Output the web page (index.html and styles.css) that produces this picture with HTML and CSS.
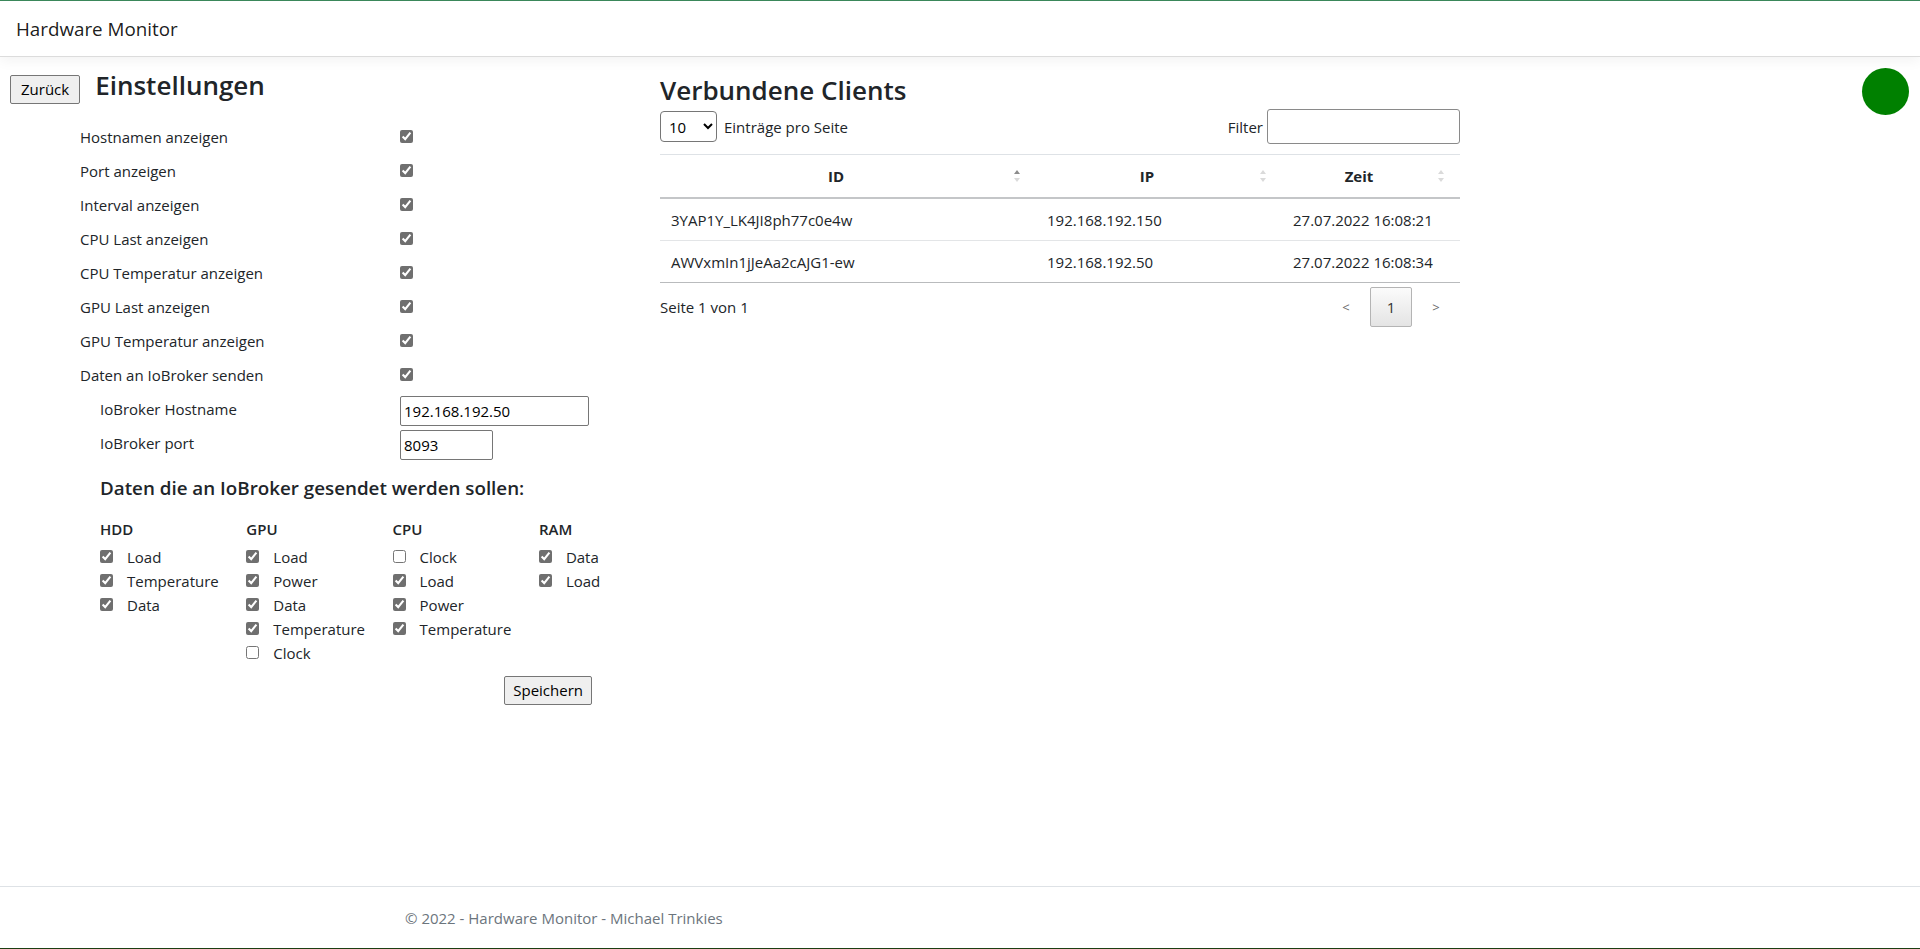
FILE: index.html
```html
<!DOCTYPE html>
<html lang="de">
<head>
<meta charset="utf-8">
<title>Hardware Monitor</title>
<link rel="stylesheet" href="styles.css">
</head>
<body>
<header class="navbar"><span class="brand">Hardware Monitor</span></header>
<main class="main">
  <section class="settings">
    <div class="settings-head">
      <button class="btn" type="button">Zurück</button>
      <h3 class="title">Einstellungen</h3>
    </div>
    <div class="settings-body">
      <div class="opt-grid">
        <span class="opt-label">Hostnamen anzeigen</span><span class="opt-ctl"><input class="cb" type="checkbox" checked></span>
        <span class="opt-label">Port anzeigen</span><span class="opt-ctl"><input class="cb" type="checkbox" checked></span>
        <span class="opt-label">Interval anzeigen</span><span class="opt-ctl"><input class="cb" type="checkbox" checked></span>
        <span class="opt-label">CPU Last anzeigen</span><span class="opt-ctl"><input class="cb" type="checkbox" checked></span>
        <span class="opt-label">CPU Temperatur anzeigen</span><span class="opt-ctl"><input class="cb" type="checkbox" checked></span>
        <span class="opt-label">GPU Last anzeigen</span><span class="opt-ctl"><input class="cb" type="checkbox" checked></span>
        <span class="opt-label">GPU Temperatur anzeigen</span><span class="opt-ctl"><input class="cb" type="checkbox" checked></span>
        <span class="opt-label">Daten an IoBroker senden</span><span class="opt-ctl"><input class="cb" type="checkbox" checked></span>
        <span class="opt-label sub">IoBroker Hostname</span><span class="opt-ctl"><input class="txt host" type="text" value="192.168.192.50"></span>
        <span class="opt-label sub">IoBroker port</span><span class="opt-ctl"><input class="txt port" type="text" value="8093"></span>
      </div>
      <h5 class="send-title">Daten die an IoBroker gesendet werden sollen:</h5>
      <div class="send-cols">
        <div class="send-col">
          <div class="col-head">HDD</div>
          <label class="chk"><input class="cb" type="checkbox" checked><span>Load</span></label>
          <label class="chk"><input class="cb" type="checkbox" checked><span>Temperature</span></label>
          <label class="chk"><input class="cb" type="checkbox" checked><span>Data</span></label>
        </div>
        <div class="send-col">
          <div class="col-head">GPU</div>
          <label class="chk"><input class="cb" type="checkbox" checked><span>Load</span></label>
          <label class="chk"><input class="cb" type="checkbox" checked><span>Power</span></label>
          <label class="chk"><input class="cb" type="checkbox" checked><span>Data</span></label>
          <label class="chk"><input class="cb" type="checkbox" checked><span>Temperature</span></label>
          <label class="chk"><input class="cb" type="checkbox"><span>Clock</span></label>
        </div>
        <div class="send-col">
          <div class="col-head">CPU</div>
          <label class="chk"><input class="cb" type="checkbox"><span>Clock</span></label>
          <label class="chk"><input class="cb" type="checkbox" checked><span>Load</span></label>
          <label class="chk"><input class="cb" type="checkbox" checked><span>Power</span></label>
          <label class="chk"><input class="cb" type="checkbox" checked><span>Temperature</span></label>
        </div>
        <div class="send-col">
          <div class="col-head">RAM</div>
          <label class="chk"><input class="cb" type="checkbox" checked><span>Data</span></label>
          <label class="chk"><input class="cb" type="checkbox" checked><span>Load</span></label>
        </div>
      </div>
      <div class="save-row"><button class="btn" type="button">Speichern</button></div>
    </div>
  </section>

  <section class="clients">
    <h3 class="title clients-title">Verbundene Clients</h3>
    <div class="controls">
      <div class="per-page">
        <select class="sel"><option>10</option><option>25</option><option>50</option></select>
        <span>Einträge pro Seite</span>
      </div>
      <div class="filter">
        <span>Filter</span>
        <input class="txt filter-input" type="text">
      </div>
    </div>
    <table class="tbl">
      <colgroup>
        <col class="c-id">
        <col class="c-ip">
        <col class="c-time">
      </colgroup>
      <thead>
        <tr>
          <th class="sort asc">ID</th>
          <th class="sort">IP</th>
          <th class="sort">Zeit</th>
        </tr>
      </thead>
      <tbody>
        <tr><td>3YAP1Y_LK4JI8ph77c0e4w</td><td>192.168.192.150</td><td>27.07.2022 16:08:21</td></tr>
        <tr><td>AWVxmIn1jJeAa2cAJG1-ew</td><td>192.168.192.50</td><td>27.07.2022 16:08:34</td></tr>
      </tbody>
    </table>
    <div class="pager-row">
      <span>Seite 1 von 1</span>
      <div class="pager">
        <span class="pg-nav">&lt;</span>
        <span class="pg-cur">1</span>
        <span class="pg-nav">&gt;</span>
      </div>
    </div>
  </section>
</main>
<footer class="footer"><div class="container">© 2022 - Hardware Monitor - Michael Trinkies</div></footer>
<div class="status-dot"></div>
</body>
</html>
```

FILE: styles.css
```css
html, body {
  margin: 0;
  padding: 0;
}
body {
  box-sizing: border-box;
  height: 949px;
  display: flex;
  flex-direction: column;
  font-family: "Open Sans", "Noto Sans", sans-serif;
  font-size: 15px;
  line-height: 20px;
  color: #212529;
  background: #fff;
  border-top: 1px solid #3a875a;
  border-bottom: 1px solid #1c3f12;
  position: relative;
}
.navbar {
  flex: none;
  height: 55px;
  border-bottom: 1px solid #dcdcdc;
  box-shadow: 0 4px 12px rgba(0, 0, 0, 0.05);
  display: flex;
  align-items: center;
  padding-left: 16px;
  position: relative;
  z-index: 1;
}
.brand {
  font-size: 18.8px;
  color: rgba(0, 0, 0, 0.9);
}
.main {
  flex: 1;
  display: flex;
  align-items: flex-start;
}
.settings {
  flex: none;
  width: 640px;
}
.settings-head {
  display: flex;
  align-items: baseline;
  gap: 15px;
  margin: 13px 0 0 10px;
}
.btn {
  font-family: "Open Sans", "Noto Sans", sans-serif;
  font-size: 15px;
  height: 29px;
  padding: 0 10px;
  background: #efefef;
  border: 1px solid #767676;
  border-radius: 2px;
  color: #000;
}
.title {
  margin: 0;
  font-size: 26px;
  line-height: 31px;
  font-weight: 600;
  color: #212529;
}
.settings-body {
  margin: 16px 0 0 80px;
  width: 512px;
}
.opt-grid {
  display: grid;
  grid-template-columns: 320px 1fr;
  grid-auto-rows: 34px;
  align-items: center;
}
.opt-label.sub {
  padding-left: 20px;
}
.opt-ctl {
  display: flex;
  align-items: center;
}
.cb {
  width: 13px;
  height: 13px;
  margin: 0;
  accent-color: #6f6f6f;
}
.txt {
  box-sizing: border-box;
  font-family: "Open Sans", "Noto Sans", sans-serif;
  font-size: 15px;
  color: #000;
  height: 30px;
  padding: 1px 3px;
  border: 1px solid #767676;
  border-radius: 2px;
  margin: 0;
}
.host,
.port {
  margin-top: 4px;
}
.host { width: 189px; }
.port { width: 93px; }
.send-title {
  margin: 17px 0 0 20px;
  font-size: 18.8px;
  line-height: 23px;
  font-weight: 600;
}
.send-cols {
  display: grid;
  grid-template-columns: repeat(4, 146.3px);
  margin: 19px 0 0 20px;
}
.col-head {
  font-weight: 600;
  line-height: 20px;
  margin-bottom: 6px;
}
.chk {
  display: flex;
  align-items: center;
  height: 24px;
  gap: 14px;
}
.save-row {
  display: flex;
  justify-content: flex-end;
  margin-top: 11px;
}
.save-row .btn {
  padding: 0 8px;
}

.clients {
  flex: none;
  width: 800px;
  margin-left: 20px;
}
.clients-title {
  margin-top: 18px;
}
.controls {
  display: flex;
  justify-content: space-between;
  align-items: center;
  height: 35px;
  margin-top: 3px;
}
.per-page {
  display: flex;
  align-items: center;
  gap: 7px;
}
.sel {
  font-family: "Open Sans", "Noto Sans", sans-serif;
  font-size: 15px;
  width: 57px;
  height: 31px;
  padding: 0 4px;
  border: 1px solid #767676;
  border-radius: 4px;
  background: #fff;
  color: #000;
}
.filter {
  display: flex;
  align-items: center;
  gap: 4px;
}
.filter-input {
  width: 193px;
  height: 35px;
  border-radius: 3px;
  border-color: #8a8a8a;
}
.tbl {
  width: 800px;
  border-collapse: collapse;
  margin-top: 10px;
  table-layout: fixed;
}
.c-id { width: 376px; }
.c-ip { width: 246px; }
.c-time { width: 178px; }
.tbl thead tr {
  border-top: 1px solid #dee2e6;
  border-bottom: 2px solid #c4c6c8;
}
.tbl th {
  height: 42px;
  font-weight: 700;
  text-align: center;
  padding: 0 24px 0 0;
  position: relative;
}
.sort::before,
.sort::after {
  content: "";
  position: absolute;
  right: 16px;
  width: 0;
  height: 0;
  border-left: 3px solid transparent;
  border-right: 3px solid transparent;
}
.sort::before {
  top: 15px;
  border-bottom: 4px solid #dadada;
}
.sort::after {
  top: 23px;
  border-top: 4px solid #dadada;
}
.sort.asc::before {
  border-bottom-color: #8c8c8c;
}
.tbl td {
  height: 41px;
  padding: 0 11px;
  border-bottom: 1px solid #e3e5e7;
}
.tbl tbody tr:last-child td {
  border-bottom: 1px solid #b9bbbd;
}
.pager-row {
  display: flex;
  justify-content: space-between;
  align-items: center;
  margin-top: 4px;
}
.pager {
  display: flex;
  align-items: center;
  gap: 12px;
  padding-right: 12px;
}
.pg-nav {
  width: 24px;
  text-align: center;
  color: #6a6a6a;
  font-size: 13px;
}
.pg-cur {
  box-sizing: border-box;
  width: 42px;
  height: 40px;
  display: flex;
  align-items: center;
  justify-content: center;
  border: 1px solid #b4b4b4;
  border-radius: 2px;
  background: linear-gradient(#fbfbfb, #e4e4e4);
  color: #333;
}
.footer {
  flex: none;
  height: 61px;
  border-top: 1px solid #dee2e6;
  color: #6c757d;
  line-height: 62px;
}
.container {
  box-sizing: border-box;
  max-width: 1140px;
  margin: 0 auto;
  padding: 0 15px;
}
.status-dot {
  position: absolute;
  top: 67px;
  right: 11px;
  width: 47px;
  height: 47px;
  border-radius: 50%;
  background: #008000;
}
```
